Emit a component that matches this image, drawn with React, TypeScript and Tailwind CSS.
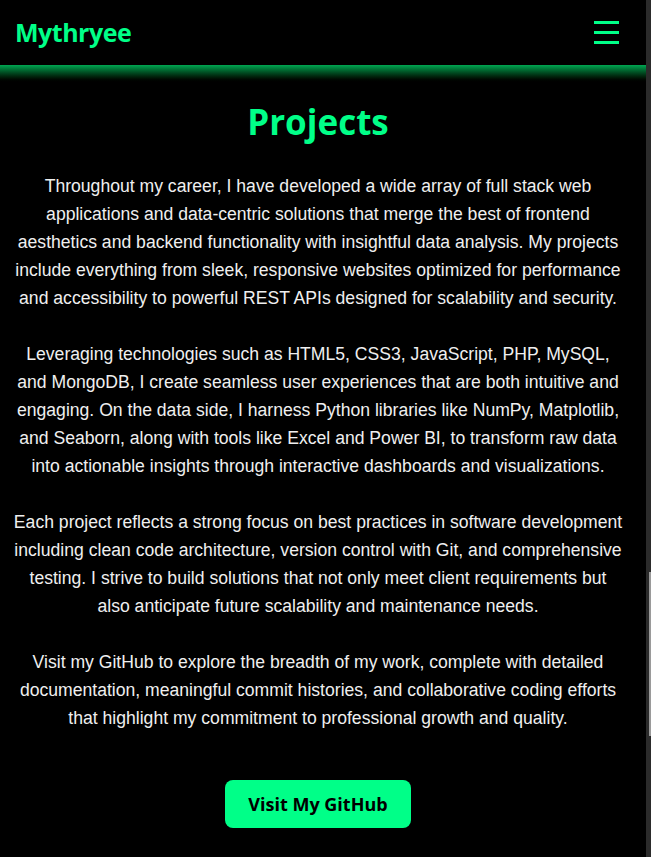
import React from 'react';

const paragraphs = [
  'Throughout my career, I have developed a wide array of full stack web applications and data-centric solutions that merge the best of frontend aesthetics and backend functionality with insightful data analysis. My projects include everything from sleek, responsive websites optimized for performance and accessibility to powerful REST APIs designed for scalability and security.',
  'Leveraging technologies such as HTML5, CSS3, JavaScript, PHP, MySQL, and MongoDB, I create seamless user experiences that are both intuitive and engaging. On the data side, I harness Python libraries like NumPy, Matplotlib, and Seaborn, along with tools like Excel and Power BI, to transform raw data into actionable insights through interactive dashboards and visualizations.',
  'Each project reflects a strong focus on best practices in software development including clean code architecture, version control with Git, and comprehensive testing. I strive to build solutions that not only meet client requirements but also anticipate future scalability and maintenance needs.',
  'Visit my GitHub to explore the breadth of my work, complete with detailed documentation, meaningful commit histories, and collaborative coding efforts that highlight my commitment to professional growth and quality.',
];

const App: React.FC = () => {
  return (
    <div className="h-[857px] flex bg-black overflow-hidden">
      <div className="flex-1 flex flex-col">
        <header className="h-[65px] flex items-center justify-between px-[15px] font-['Comic_Sans_MS','Open_Sans',sans-serif]">
          <span className="text-[25px] font-bold text-[#00ff88] leading-none tracking-[-0.5px]">Mythryee</span>
          <button className="flex flex-col gap-[7px] mr-[12px]">
            <span className="block w-[25px] h-[3px] bg-[#00ff88]" />
            <span className="block w-[25px] h-[3px] bg-[#00ff88]" />
            <span className="block w-[25px] h-[3px] bg-[#00ff88]" />
          </button>
        </header>
        <div className="h-[18px] bg-gradient-to-b from-[#00a651] to-black" />

        <main className="flex flex-col items-center pl-[12px] pr-[22px]">
          <h1 className="mt-[17px] text-[35px] font-bold leading-[44px] text-[#00ff88] font-['Comic_Sans_MS','Open_Sans',sans-serif]">
            Projects
          </h1>
          <div className="mt-[28px] flex flex-col gap-[28px] text-center text-[17.6px] leading-[28px] text-[#efefef] font-['Liberation_Sans',Arial,sans-serif]">
            {paragraphs.map((p, i) => (
              <p key={i}>{p}</p>
            ))}
          </div>
          <button className="mt-[48px] w-[186px] h-[48px] rounded-[8px] bg-[#00ff88] text-black text-[18px] font-bold font-['Comic_Sans_MS','Open_Sans',sans-serif]">
            Visit My GitHub
          </button>
        </main>
      </div>
      <div className="w-[5px] bg-[#2b2b2b] flex flex-col items-end">
        <div className="mt-[572px] w-[2px] h-[164px] bg-[#9a9a9a]" />
      </div>
    </div>
  );
};

export default App;
